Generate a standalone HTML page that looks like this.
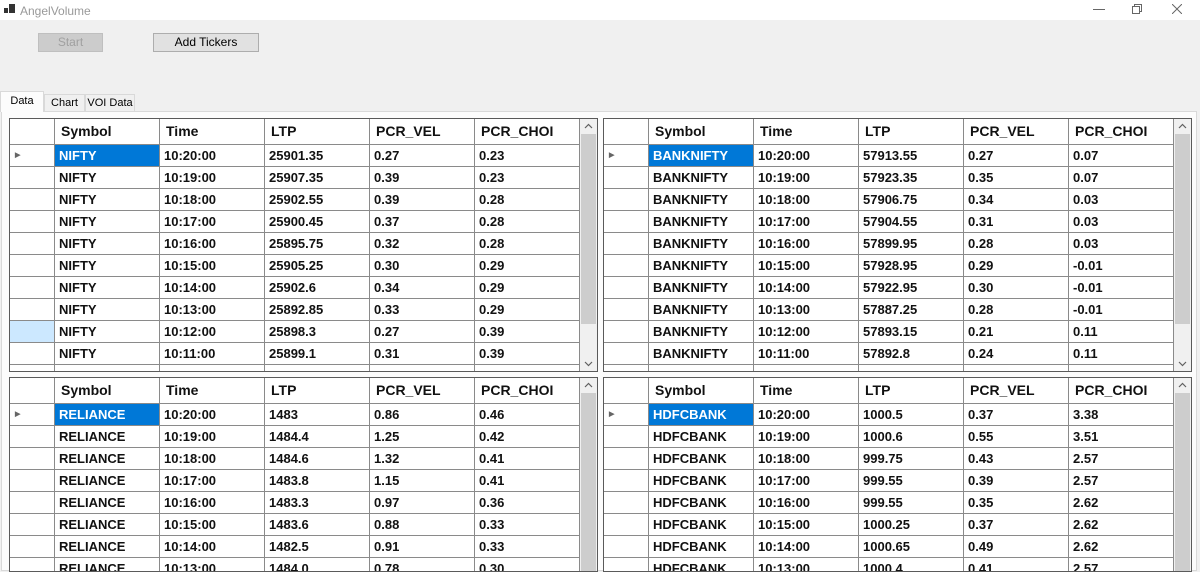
<!DOCTYPE html>
<html><head><meta charset="utf-8">
<style>
*{margin:0;padding:0;box-sizing:border-box}
body{width:1200px;height:566px;overflow:hidden;background:#f0f0f0;font-family:"Liberation Sans",sans-serif;position:relative}
.title{position:absolute;left:0;top:0;width:1200px;height:20px;background:#fff;font-size:12px;color:#999}
.title .t{position:absolute;left:20px;top:4px}
.btn{position:absolute;height:19px;border:1px solid #adadad;background:#e1e1e1;font-size:12px;text-align:center;line-height:17px;color:#000}
.tab{position:absolute;font-size:11px;border:1px solid #d9d9d9;border-bottom:none;text-align:center;color:#000}
.page{position:absolute;left:1px;top:111px;width:1196px;height:460px;background:#fcfcfc;border:1px solid #d9d9d9}
.grid{position:absolute;background:#fff;border:1px solid #5a5a5a;overflow:hidden}
table{border-collapse:collapse;position:absolute;left:-1px;top:0;table-layout:fixed}
td{height:22px;border:1px solid #8a8a8a;font-weight:bold;font-size:13px;padding-left:4px;white-space:nowrap;overflow:hidden;color:#111}
tr.h td{height:25px;font-size:14px;padding-left:6px;border-top:none}
td.sel{background:#0078d7;color:#fff}
td.rs{background:#cce8ff}
.arrow{font-size:7px;color:#666;padding-left:5px}
.sb{position:absolute;top:0;right:0;width:17px;height:100%;background:#f0f0f0}
.sb .th{position:absolute;left:1px;width:15px;background:#cdcdcd}
.sb svg{position:absolute;left:4px}
</style></head><body>
<div class="title">
<svg style="position:absolute;left:4px;top:4px" width="11" height="10"><rect x="0" y="4" width="4" height="5" fill="#333"/><rect x="5" y="0" width="6" height="9" fill="#333"/></svg>
<span class="t">AngelVolume</span>
<svg style="position:absolute;left:1093px;top:9px" width="12" height="2"><path d="M0 0.5H12" stroke="#666"/></svg>
<svg style="position:absolute;left:1132px;top:4px" width="10" height="10"><rect x="0.5" y="2.5" width="7" height="7" fill="none" stroke="#666"/><path d="M2.5 2.5V0.5H9.5V7.5H7.5" fill="none" stroke="#666"/></svg>
<svg style="position:absolute;left:1172px;top:4px" width="10" height="10"><path d="M0 0L10 10M10 0L0 10" stroke="#666"/></svg>
</div>
<div class="btn" style="left:38px;top:33px;width:65px;color:#a0a0a0;background:#ccc;border-color:#bfbfbf">Start</div>
<div class="btn" style="left:153px;top:33px;width:106px">Add Tickers</div>
<div class="page"></div>
<div class="tab" style="left:44px;top:94px;width:41px;height:17px;line-height:16px">Chart</div>
<div class="tab" style="left:85px;top:94px;width:50px;height:17px;line-height:16px">VOI Data</div>
<div class="tab" style="left:0;top:91px;width:44px;height:21px;line-height:19px;background:#fcfcfc;z-index:2">Data</div>

<!-- Grid 1 -->
<div class="grid" style="left:9px;top:118px;width:589px;height:254px">
<table style="width:570px">
<colgroup><col style="width:45px"><col style="width:105px"><col style="width:105px"><col style="width:105px"><col style="width:105px"><col style="width:105px"></colgroup>
<tr class="h"><td></td><td>Symbol</td><td>Time</td><td>LTP</td><td>PCR_VEL</td><td>PCR_CHOI</td></tr>
<tr><td class="arrow">▶</td><td class="sel">NIFTY</td><td>10:20:00</td><td>25901.35</td><td>0.27</td><td>0.23</td></tr>
<tr><td></td><td>NIFTY</td><td>10:19:00</td><td>25907.35</td><td>0.39</td><td>0.23</td></tr>
<tr><td></td><td>NIFTY</td><td>10:18:00</td><td>25902.55</td><td>0.39</td><td>0.28</td></tr>
<tr><td></td><td>NIFTY</td><td>10:17:00</td><td>25900.45</td><td>0.37</td><td>0.28</td></tr>
<tr><td></td><td>NIFTY</td><td>10:16:00</td><td>25895.75</td><td>0.32</td><td>0.28</td></tr>
<tr><td></td><td>NIFTY</td><td>10:15:00</td><td>25905.25</td><td>0.30</td><td>0.29</td></tr>
<tr><td></td><td>NIFTY</td><td>10:14:00</td><td>25902.6</td><td>0.34</td><td>0.29</td></tr>
<tr><td></td><td>NIFTY</td><td>10:13:00</td><td>25892.85</td><td>0.33</td><td>0.29</td></tr>
<tr><td class="rs"></td><td>NIFTY</td><td>10:12:00</td><td>25898.3</td><td>0.27</td><td>0.39</td></tr>
<tr><td></td><td>NIFTY</td><td>10:11:00</td><td>25899.1</td><td>0.31</td><td>0.39</td></tr>
<tr><td></td><td></td><td></td><td></td><td></td><td></td></tr>
</table>
<div class="sb"><svg style="top:4px" width="9" height="6"><path d="M1 5L4.5 1.5L8 5" fill="none" stroke="#606060" stroke-width="1.2"/></svg><div class="th" style="top:15px;height:190px"></div><svg style="bottom:4px" width="9" height="6"><path d="M1 1L4.5 4.5L8 1" fill="none" stroke="#606060" stroke-width="1.2"/></svg></div>
</div>

<!-- Grid 2 -->
<div class="grid" style="left:603px;top:118px;width:589px;height:254px">
<table style="width:570px">
<colgroup><col style="width:45px"><col style="width:105px"><col style="width:105px"><col style="width:105px"><col style="width:105px"><col style="width:105px"></colgroup>
<tr class="h"><td></td><td>Symbol</td><td>Time</td><td>LTP</td><td>PCR_VEL</td><td>PCR_CHOI</td></tr>
<tr><td class="arrow">▶</td><td class="sel">BANKNIFTY</td><td>10:20:00</td><td>57913.55</td><td>0.27</td><td>0.07</td></tr>
<tr><td></td><td>BANKNIFTY</td><td>10:19:00</td><td>57923.35</td><td>0.35</td><td>0.07</td></tr>
<tr><td></td><td>BANKNIFTY</td><td>10:18:00</td><td>57906.75</td><td>0.34</td><td>0.03</td></tr>
<tr><td></td><td>BANKNIFTY</td><td>10:17:00</td><td>57904.55</td><td>0.31</td><td>0.03</td></tr>
<tr><td></td><td>BANKNIFTY</td><td>10:16:00</td><td>57899.95</td><td>0.28</td><td>0.03</td></tr>
<tr><td></td><td>BANKNIFTY</td><td>10:15:00</td><td>57928.95</td><td>0.29</td><td>-0.01</td></tr>
<tr><td></td><td>BANKNIFTY</td><td>10:14:00</td><td>57922.95</td><td>0.30</td><td>-0.01</td></tr>
<tr><td></td><td>BANKNIFTY</td><td>10:13:00</td><td>57887.25</td><td>0.28</td><td>-0.01</td></tr>
<tr><td></td><td>BANKNIFTY</td><td>10:12:00</td><td>57893.15</td><td>0.21</td><td>0.11</td></tr>
<tr><td></td><td>BANKNIFTY</td><td>10:11:00</td><td>57892.8</td><td>0.24</td><td>0.11</td></tr>
<tr><td></td><td></td><td></td><td></td><td></td><td></td></tr>
</table>
<div class="sb"><svg style="top:4px" width="9" height="6"><path d="M1 5L4.5 1.5L8 5" fill="none" stroke="#606060" stroke-width="1.2"/></svg><div class="th" style="top:15px;height:190px"></div><svg style="bottom:4px" width="9" height="6"><path d="M1 1L4.5 4.5L8 1" fill="none" stroke="#606060" stroke-width="1.2"/></svg></div>
</div>

<!-- Grid 3 -->
<div class="grid" style="left:9px;top:377px;width:589px;height:195px">
<table style="width:570px">
<colgroup><col style="width:45px"><col style="width:105px"><col style="width:105px"><col style="width:105px"><col style="width:105px"><col style="width:105px"></colgroup>
<tr class="h"><td></td><td>Symbol</td><td>Time</td><td>LTP</td><td>PCR_VEL</td><td>PCR_CHOI</td></tr>
<tr><td class="arrow">▶</td><td class="sel">RELIANCE</td><td>10:20:00</td><td>1483</td><td>0.86</td><td>0.46</td></tr>
<tr><td></td><td>RELIANCE</td><td>10:19:00</td><td>1484.4</td><td>1.25</td><td>0.42</td></tr>
<tr><td></td><td>RELIANCE</td><td>10:18:00</td><td>1484.6</td><td>1.32</td><td>0.41</td></tr>
<tr><td></td><td>RELIANCE</td><td>10:17:00</td><td>1483.8</td><td>1.15</td><td>0.41</td></tr>
<tr><td></td><td>RELIANCE</td><td>10:16:00</td><td>1483.3</td><td>0.97</td><td>0.36</td></tr>
<tr><td></td><td>RELIANCE</td><td>10:15:00</td><td>1483.6</td><td>0.88</td><td>0.33</td></tr>
<tr><td></td><td>RELIANCE</td><td>10:14:00</td><td>1482.5</td><td>0.91</td><td>0.33</td></tr>
<tr><td></td><td>RELIANCE</td><td>10:13:00</td><td>1484.0</td><td>0.78</td><td>0.30</td></tr>
</table>
<div class="sb"><svg style="top:4px" width="9" height="6"><path d="M1 5L4.5 1.5L8 5" fill="none" stroke="#606060" stroke-width="1.2"/></svg><div class="th" style="top:15px;height:200px"></div></div>
</div>

<!-- Grid 4 -->
<div class="grid" style="left:603px;top:377px;width:589px;height:195px">
<table style="width:570px">
<colgroup><col style="width:45px"><col style="width:105px"><col style="width:105px"><col style="width:105px"><col style="width:105px"><col style="width:105px"></colgroup>
<tr class="h"><td></td><td>Symbol</td><td>Time</td><td>LTP</td><td>PCR_VEL</td><td>PCR_CHOI</td></tr>
<tr><td class="arrow">▶</td><td class="sel">HDFCBANK</td><td>10:20:00</td><td>1000.5</td><td>0.37</td><td>3.38</td></tr>
<tr><td></td><td>HDFCBANK</td><td>10:19:00</td><td>1000.6</td><td>0.55</td><td>3.51</td></tr>
<tr><td></td><td>HDFCBANK</td><td>10:18:00</td><td>999.75</td><td>0.43</td><td>2.57</td></tr>
<tr><td></td><td>HDFCBANK</td><td>10:17:00</td><td>999.55</td><td>0.39</td><td>2.57</td></tr>
<tr><td></td><td>HDFCBANK</td><td>10:16:00</td><td>999.55</td><td>0.35</td><td>2.62</td></tr>
<tr><td></td><td>HDFCBANK</td><td>10:15:00</td><td>1000.25</td><td>0.37</td><td>2.62</td></tr>
<tr><td></td><td>HDFCBANK</td><td>10:14:00</td><td>1000.65</td><td>0.49</td><td>2.62</td></tr>
<tr><td></td><td>HDFCBANK</td><td>10:13:00</td><td>1000.4</td><td>0.41</td><td>2.57</td></tr>
</table>
<div class="sb"><svg style="top:4px" width="9" height="6"><path d="M1 5L4.5 1.5L8 5" fill="none" stroke="#606060" stroke-width="1.2"/></svg><div class="th" style="top:15px;height:200px"></div></div>
</div>
</body></html>
